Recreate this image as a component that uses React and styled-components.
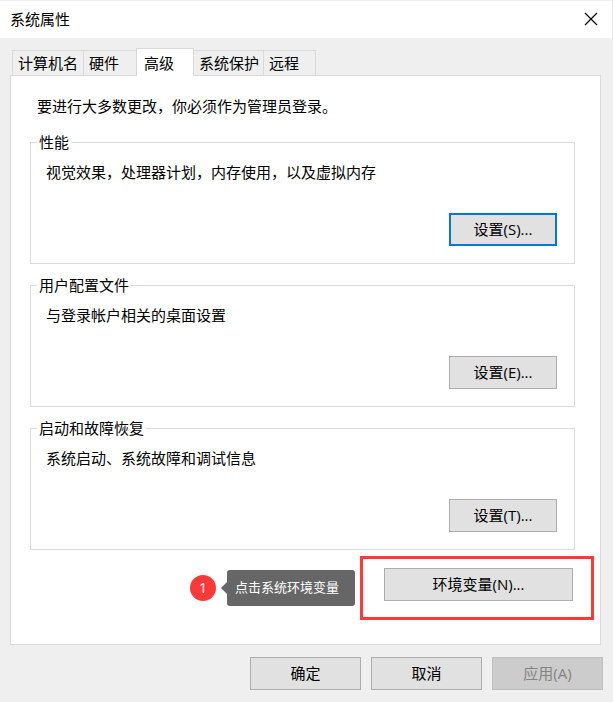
import React, { useState } from 'react'
import styled, { createGlobalStyle } from 'styled-components'

const GlobalStyle = createGlobalStyle`
    * {
        box-sizing: border-box;
    }

    body {
        margin: 0;
        background: #efefef;
        color: #000;
        font-family: "Open Sans", "Noto Sans CJK SC", sans-serif;
        font-size: 15px;
        line-height: 20px;
    }

    button {
        font: inherit;
        color: inherit;
    }
`;

const Dialog = styled.div`
    min-height: 100vh;
    padding-top: 1px;
    background: #efefef;
    overflow: hidden;
`;

const TitleBar = styled.header`
    display: flex;
    align-items: center;
    justify-content: space-between;
    height: 37px;
    margin-right: 1px;
    padding: 0 14px 2px 10px;
    background: #fff;
`;

const Title = styled.h1`
    margin: 0;
    font-size: 15px;
    font-weight: normal;
`;

const CloseButton = styled.button`
    display: flex;
    padding: 0;
    border: 0;
    background: none;
`;

const Body = styled.main`
    padding: 10px 12px 0 10px;
`;

const TabList = styled.div`
    display: flex;
    align-items: flex-end;
    padding-left: 2px;
`;

const Tab = styled.button`
    height: ${props => props.$active ? '28px' : '25px'};
    width: ${props => props.$width}px;
    margin: ${props => props.$active ? '0 -1px -1px 0' : '0 -1px 0 0'};
    padding: 0 0 0 ${props => props.$active ? '7px' : '5px'};
    border: 1px solid #d9d9d9;
    border-bottom: 0;
    background: ${props => props.$active ? '#fff' : '#efefef'};
    text-align: left;
    white-space: nowrap;
    z-index: ${props => props.$active ? 1 : 0};
`;

const Panel = styled.div`
    padding: 20px 6px 24px 19px;
    border: 1px solid #d9d9d9;
    background: #fff;
`;

const Notice = styled.p`
    margin: 0 0 16px;
    padding-left: 7px;
`;

const Group = styled.fieldset`
    height: 132px;
    margin: 0 19px 11px 0;
    padding: 0 17px 17px 15px;
    border: 1px solid #dcdcdc;
    display: flex;
    flex-direction: column;
    justify-content: space-between;

    &:last-of-type {
        margin-bottom: 6px;
    }
`;

const GroupTitle = styled.legend`
    margin-left: -9px;
    padding: 0 2px;
`;

const GroupText = styled.p`
    margin: 0;
    padding-top: 10px;
`;

const PushButton = styled.button`
    display: block;
    width: ${props => props.$width}px;
    height: 33px;
    margin-left: ${props => props.$right ? 'auto' : '0'};
    padding: 0 0 2px;
    border: ${props => props.$primary ? '2px solid #0078d7' : '1px solid #adadad'};
    background: #e1e1e1;
    text-align: center;

    &:disabled {
        border-color: #bfbfbf;
        background: #ccc;
        color: #838383;
    }
`;

const EnvironmentRow = styled.div`
    display: flex;
    align-items: center;
    justify-content: flex-end;
`;

const Step = styled.span`
    width: 26px;
    height: 26px;
    margin-right: 11px;
    border-radius: 50%;
    background: #fd3838;
    color: #fff;
    line-height: 24px;
    text-align: center;
`;

const Hint = styled.div`
    position: relative;
    width: 128px;
    height: 36px;
    margin-right: 5px;
    padding-left: 8px;
    border-radius: 3px;
    background: #666;
    color: #fff;
    font-size: 13px;
    line-height: 35px;
    white-space: nowrap;

    &::before {
        content: '';
        position: absolute;
        left: -6px;
        top: 12px;
        border: solid transparent;
        border-width: 6px 6px 6px 0;
        border-right-color: #666;
    }
`;

const Highlight = styled.div`
    padding: 9px 18px 16px 21px;
    border: 3px solid #fd3838;
`;

const Footer = styled.footer`
    display: flex;
    justify-content: flex-end;
    gap: 10px;
    padding: 12px 10px 0;
`;

const tabs = [
    { name: '计算机名', width: 72 },
    { name: '硬件', width: 54 },
    { name: '高级', width: 58 },
    { name: '系统保护', width: 71 },
    { name: '远程', width: 53 },
]

const groups = [
    { title: '性能', text: '视觉效果，处理器计划，内存使用，以及虚拟内存', button: '设置(S)...', primary: true },
    { title: '用户配置文件', text: '与登录帐户相关的桌面设置', button: '设置(E)...' },
    { title: '启动和故障恢复', text: '系统启动、系统故障和调试信息', button: '设置(T)...' },
]

export default function App() {

    const [active, setActive] = useState('高级')

    return (
        <Dialog>
            <GlobalStyle />
            <TitleBar>
                <Title>系统属性</Title>
                <CloseButton aria-label="关闭">
                    <svg width="14" height="14" viewBox="0 0 14 14" fill="none" stroke="#000" strokeWidth="1.2">
                        <path d="M1 1 13 13M13 1 1 13" />
                    </svg>
                </CloseButton>
            </TitleBar>
            <Body>
                <TabList role="tablist">
                    {tabs.map(tab => (
                        <Tab
                            key={tab.name}
                            role="tab"
                            aria-selected={tab.name === active}
                            $active={tab.name === active}
                            $width={tab.width}
                            onClick={() => setActive(tab.name)}
                        >
                            {tab.name}
                        </Tab>
                    ))}
                </TabList>
                <Panel role="tabpanel">
                    <Notice>要进行大多数更改，你必须作为管理员登录。</Notice>
                    {groups.map(group => (
                        <Group key={group.title}>
                            <GroupTitle>{group.title}</GroupTitle>
                            <GroupText>{group.text}</GroupText>
                            <PushButton $width={108} $right $primary={group.primary}>{group.button}</PushButton>
                        </Group>
                    ))}
                    <EnvironmentRow>
                        <Step>1</Step>
                        <Hint>点击系统环境变量</Hint>
                        <Highlight>
                            <PushButton $width={189}>环境变量(N)...</PushButton>
                        </Highlight>
                    </EnvironmentRow>
                </Panel>
            </Body>
            <Footer>
                <PushButton $width={111}>确定</PushButton>
                <PushButton $width={111}>取消</PushButton>
                <PushButton $width={111} disabled>应用(A)</PushButton>
            </Footer>
        </Dialog>
    )
}
